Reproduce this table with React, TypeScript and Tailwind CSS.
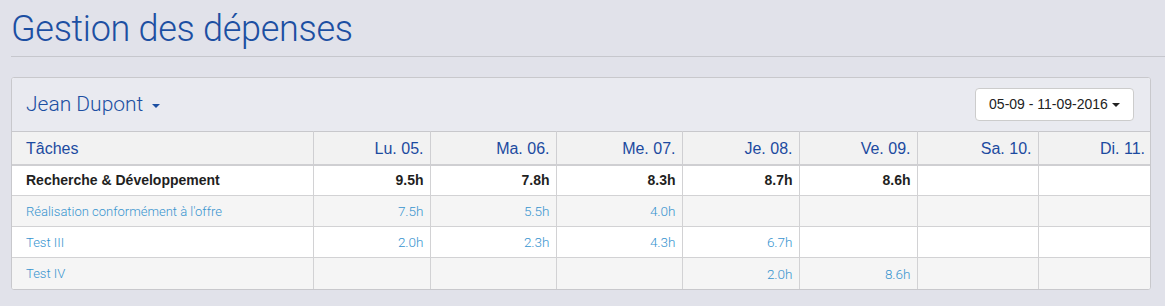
import React from "react";

const days = ["Lu. 05.", "Ma. 06.", "Me. 07.", "Je. 08.", "Ve. 09.", "Sa. 10.", "Di. 11."];
const widths = [301, 117, 126, 126, 117, 118, 121, 113];

type Row = { name: string; vals: string[]; bold?: boolean };
const rows: Row[] = [
  { name: "Recherche & Développement", vals: ["9.5h", "7.8h", "8.3h", "8.7h", "8.6h", "", ""], bold: true },
  { name: "Réalisation conformément à l'offre", vals: ["7.5h", "5.5h", "4.0h", "", "", "", ""] },
  { name: "Test III", vals: ["2.0h", "2.3h", "4.3h", "6.7h", "", "", ""] },
  { name: "Test IV", vals: ["", "", "", "2.0h", "8.6h", "", ""] },
];

function Caret({ className }: { className?: string }) {
  return (
    <svg width="8" height="4" viewBox="0 0 8 4" className={className}>
      <path d="M0 0 L8 0 L4 4 Z" fill="currentColor" />
    </svg>
  );
}

const light = { fontFamily: "Roboto, 'Liberation Sans', sans-serif" };

export default function App() {
  return (
    <div
      className="min-h-screen bg-[#e1e2ea] pl-[11px] pb-4"
      style={{ fontFamily: "'Liberation Sans', Arial, sans-serif" }}
    >
      <h1 className="pt-[9px] text-[36px] leading-[40px] font-light text-[#1c4fa2] tracking-[-0.3px]" style={light}>
        Gestion des dépenses
      </h1>
      <div className="mt-[7px] border-t border-[#c6c7cd]" />
      <div className="mt-[20px] mr-[14px] rounded-[3px] border border-[#c8c8cc] bg-white overflow-hidden">
        <div className="flex h-[53px] items-center justify-between bg-[#e9eaf0] pl-[14px] pr-[16px]">
          <div className="flex items-center gap-[9px] text-[21px] font-light text-[#1c4fa2]" style={light}>
            <span>Jean Dupont</span>
            <Caret className="mt-[2px]" />
          </div>
          <div className="flex h-[33px] w-[159px] items-center justify-center gap-[4px] rounded-[4px] border border-[#cccccc] bg-white text-[14px] text-[#222]">
            <span>05-09 - 11-09-2016</span>
            <Caret />
          </div>
        </div>
        <table className="w-full border-collapse table-fixed">
          <colgroup>
            {widths.map((w, i) => (
              <col key={i} style={{ width: w }} />
            ))}
          </colgroup>
          <thead>
            <tr className="bg-[#f2f2f2] border-t border-[#c8c8cc]">
              <th className="h-[33px] pt-[3px] border-b-2 border-[#cfcfd2] pl-[14px] text-left text-[16px] font-normal text-[#1c4aa0]">
                Tâches
              </th>
              {days.map((d) => (
                <th
                  key={d}
                  className="h-[33px] pt-[3px] border-b-2 border-l border-[#cfcfd2] pr-[6px] text-right text-[16px] font-normal text-[#1c4aa0]"
                >
                  {d}
                </th>
              ))}
            </tr>
          </thead>
          <tbody>
            {rows.map((r, ri) => (
              <tr key={r.name} className={ri % 2 === 1 ? "bg-[#f5f5f5]" : "bg-white"}>
                <td
                  className={
                    "h-[31px] pt-[1px] border-t border-[#d2d2d4] pl-[14px] " +
                    (r.bold ? "text-[14px] font-bold text-[#1f1f1f]" : "text-[13px] font-light text-[#3794cf]")
                  }
                  style={r.bold ? undefined : light}
                >
                  {r.name}
                </td>
                {r.vals.map((v, vi) => (
                  <td
                    key={vi}
                    className={
                      "h-[31px] pt-[1px] border-t border-l border-[#d2d2d4] pr-[6px] text-right " +
                      (r.bold ? "text-[14px] font-bold text-[#1f1f1f]" : "text-[13.5px] font-light text-[#3794cf]")
                    }
                    style={r.bold ? undefined : light}
                  >
                    {v}
                  </td>
                ))}
              </tr>
            ))}
          </tbody>
        </table>
      </div>
    </div>
  );
}
